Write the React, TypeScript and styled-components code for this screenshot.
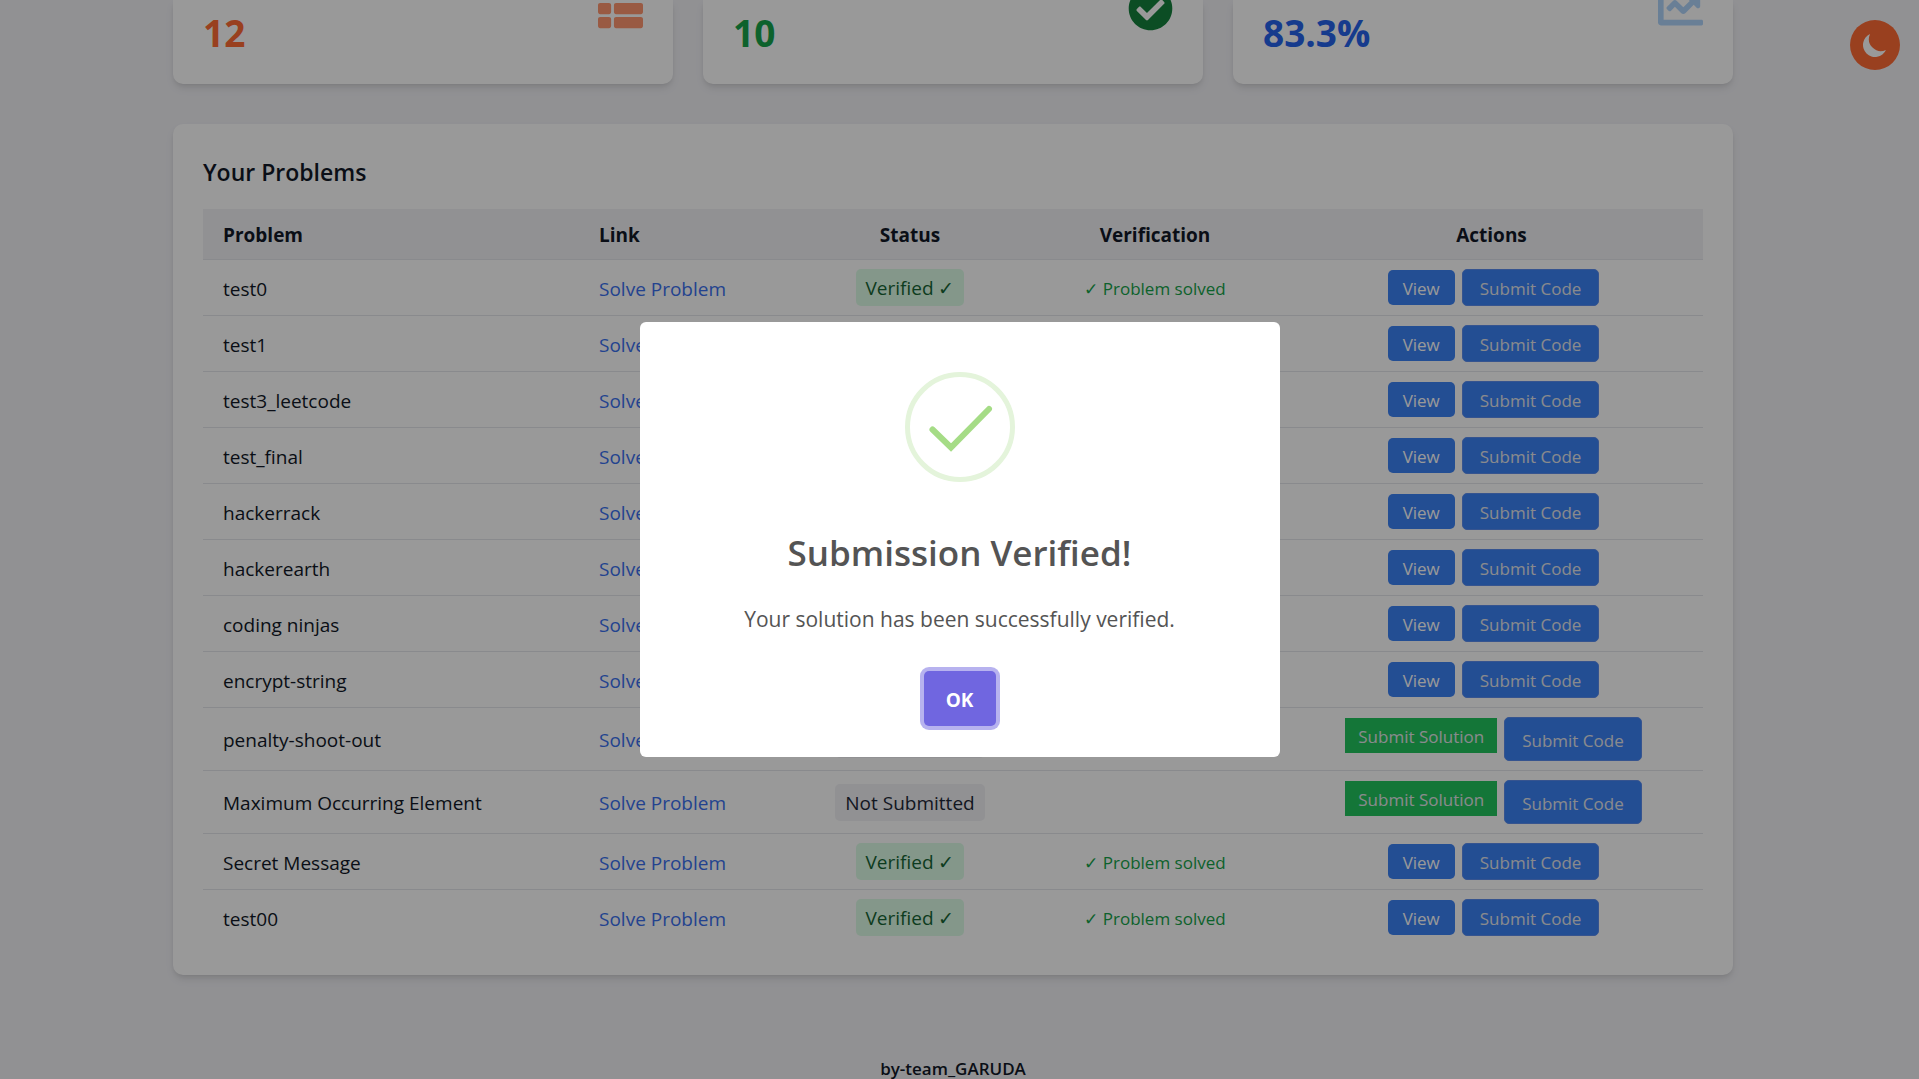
import React from 'react';
import styled, { createGlobalStyle, css } from 'styled-components';
import { FaThList, FaCheckCircle, FaChartLine } from 'react-icons/fa';

const GlobalStyle = createGlobalStyle`
  *, *::before, *::after { box-sizing: border-box; }
  body {
    margin: 0;
    overflow: hidden;
    background: #f2f2f6;
    color: #111827;
    font-family: 'Segoe UI', 'Open Sans', 'Noto Sans', sans-serif;
    font-size: 19px;
    line-height: 30px;
  }
  button { font-family: inherit; cursor: pointer; }
`;

const Page = styled.div`
  height: 100vh;
  overflow: hidden;
  padding-right: 13px;
  display: flex;
  flex-direction: column;
`;

const Container = styled.main`
  width: 100%;
  max-width: 1600px;
  margin: 0 auto;
  padding: 0 20px;
  display: flex;
  flex-direction: column;
  gap: 40px;
`;

const Stats = styled.section`
  display: grid;
  grid-template-columns: repeat(3, 1fr);
  gap: 30px;
`;

const cardLook = css`
  background: #fff;
  box-shadow: 0 5px 8px -1px rgba(0, 0, 0, 0.1), 0 2px 5px -2px rgba(0, 0, 0, 0.1);
`;

const StatCard = styled.article`
  ${cardLook}
  height: 84px;
  padding: 0 30px;
  border-radius: 0 0 10px 10px;
  display: flex;
  justify-content: space-between;
`;

const StatValue = styled.p<{ $color: string }>`
  margin: 0;
  padding-top: 8px;
  font-size: 37px;
  line-height: 50px;
  font-weight: 700;
  color: ${(p) => p.$color};
`;

const StatIcon = styled.span<{ $color: string }>`
  height: 31px;
  display: flex;
  align-items: flex-end;
  color: ${(p) => p.$color};
  svg { display: block; flex: none; }
`;

const Panel = styled.section`
  ${cardLook}
  padding: 30px;
  border-radius: 10px;
`;

const PanelTitle = styled.h2`
  margin: 0;
  padding: 1px 0 19px;
  font-size: 23px;
  line-height: 35px;
  font-weight: 600;
`;

const Table = styled.table`
  width: 100%;
  table-layout: fixed;
  border-collapse: separate;
  border-spacing: 0;
`;

const Col = styled.col<{ $w?: number }>`
  width: ${(p) => (p.$w ? `${p.$w}px` : 'auto')};
`;

const Th = styled.th<{ $center?: boolean }>`
  height: 51px;
  padding: 2px 20px 0;
  background: #f2f2f6;
  border-bottom: 1px solid #e5e7eb;
  font-weight: 700;
  text-align: ${(p) => (p.$center ? 'center' : 'left')};
`;

const Td = styled.td<{ $center?: boolean }>`
  padding: 9px 20px;
  border-bottom: 1px solid #e5e7eb;
  text-align: ${(p) => (p.$center ? 'center' : 'left')};
  white-space: nowrap;
  tr:last-child > & { border-bottom: 0; }
`;

const TextLine = styled.span`
  display: block;
  padding-top: 2px;
`;

const SolveLink = styled.a`
  color: #3b70ee;
  text-decoration: none;
`;

const Badge = styled.span<{ $ok?: boolean }>`
  display: inline-block;
  vertical-align: middle;
  height: 37px;
  padding: 1px 10px 0;
  border-radius: 5px;
  line-height: 37px;
  background: ${(p) => (p.$ok ? '#dcfce7' : '#f2f2f6')};
  color: ${(p) => (p.$ok ? '#166534' : '#1f2937')};
`;

const Solved = styled.span`
  font-size: 17px;
  color: #16a34a;
`;

const Actions = styled.div`
  display: flex;
  justify-content: center;
  align-items: center;
  gap: 7px;
  padding-left: 4px;
`;

const Action = styled.button<{ $kind: 'view' | 'solution' | 'code'; $tall?: boolean }>`
  height: 35px;
  padding: 2px 15px 0;
  border: 0;
  border-radius: 5px;
  background: #3b82f6;
  color: #fff;
  font-size: 17px;
  line-height: 25px;
  ${(p) => p.$kind === 'solution' && css`
    align-self: flex-start;
    margin-top: 1px;
    padding: 2px 13px 0;
    border-radius: 0;
    background: #22c55e;
    color: #e5e7eb;
  `}
  ${(p) => p.$kind === 'code' && css`
    height: ${p.$tall ? 44 : 37}px;
    padding: 2px 17px 0;
    border: 1px solid #5b8def;
    color: #e5e7eb;
  `}
`;

const Footer = styled.footer`
  margin-top: 79px;
  text-align: center;
  font-size: 17px;
  font-weight: 600;
`;

const ThemeToggle = styled.button`
  position: fixed;
  top: 20px;
  right: 19px;
  width: 50px;
  height: 50px;
  padding: 0;
  border: 0;
  border-radius: 50%;
  display: grid;
  place-items: center;
  background: #ff6b35;
  color: #fff;
`;

const Overlay = styled.div`
  position: fixed;
  inset: 0;
  display: grid;
  place-items: center;
  background: rgba(0, 0, 0, 0.4);
`;

const Dialog = styled.div`
  width: 640px;
  padding: 50px 0 31px;
  border-radius: 6px;
  background: #fff;
  color: #545454;
  display: flex;
  flex-direction: column;
  align-items: center;
`;

const DialogTitle = styled.h2`
  margin: 43px 0 0;
  font-size: 35px;
  line-height: 56px;
  font-weight: 600;
`;

const DialogText = styled.p`
  margin: 21px 0 0;
  font-size: 21px;
  line-height: 34px;
`;

const OkButton = styled.button`
  margin-top: 35px;
  width: 72px;
  height: 55px;
  padding: 2px 0 0;
  border: 0;
  border-radius: 5px;
  background: #7066e0;
  box-shadow: 0 0 0 4px rgba(112, 102, 224, 0.5);
  color: #fff;
  font-size: 19px;
  font-weight: 700;
`;

type Problem = { name: string; verified: boolean };

const problems: Problem[] = [
  { name: 'test0', verified: true },
  { name: 'test1', verified: true },
  { name: 'test3_leetcode', verified: true },
  { name: 'test_final', verified: true },
  { name: 'hackerrack', verified: true },
  { name: 'hackerearth', verified: true },
  { name: 'coding ninjas', verified: true },
  { name: 'encrypt-string', verified: true },
  { name: 'penalty-shoot-out', verified: false },
  { name: 'Maximum Occurring Element', verified: false },
  { name: 'Secret Message', verified: true },
  { name: 'test00', verified: true },
];

function ProblemRow({ name, verified }: Problem) {
  return (
    <tr>
      <Td><TextLine>{name}</TextLine></Td>
      <Td><TextLine><SolveLink href="#">Solve Problem</SolveLink></TextLine></Td>
      <Td $center><Badge $ok={verified}>{verified ? 'Verified ✓' : 'Not Submitted'}</Badge></Td>
      <Td $center>{verified && <TextLine><Solved>✓ Problem solved</Solved></TextLine>}</Td>
      <Td $center>
        <Actions>
          {verified
            ? <Action type="button" $kind="view">View</Action>
            : <Action type="button" $kind="solution">Submit Solution</Action>}
          <Action type="button" $kind="code" $tall={!verified}>Submit Code</Action>
        </Actions>
      </Td>
    </tr>
  );
}

function MoonIcon() {
  return (
    <svg width="30" height="30" viewBox="0 0 20 20" fill="currentColor" aria-hidden="true">
      <path d="M17.293 13.293A8 8 0 016.707 2.707a8.001 8.001 0 1010.586 10.586z" />
    </svg>
  );
}

export default function App() {
  return (
    <>
      <GlobalStyle />
      <Page>
        <Container>
          <Stats>
            <StatCard>
              <StatValue $color="#ff6b35">12</StatValue>
              <StatIcon $color="#ff9770"><FaThList size={45} /></StatIcon>
            </StatCard>
            <StatCard>
              <StatValue $color="#16a34a">10</StatValue>
              <StatIcon $color="#15803d"><FaCheckCircle size={45} /></StatIcon>
            </StatCard>
            <StatCard>
              <StatValue $color="#2563eb">83.3%</StatValue>
              <StatIcon $color="#b0d4fb"><FaChartLine size={45} /></StatIcon>
            </StatCard>
          </Stats>
          <Panel>
            <PanelTitle>Your Problems</PanelTitle>
            <Table>
              <colgroup>
                <Col $w={376} /><Col $w={211} /><Col $w={240} /><Col $w={250} /><Col />
              </colgroup>
              <thead>
                <tr>
                  <Th>Problem</Th>
                  <Th>Link</Th>
                  <Th $center>Status</Th>
                  <Th $center>Verification</Th>
                  <Th $center>Actions</Th>
                </tr>
              </thead>
              <tbody>
                {problems.map((p) => <ProblemRow key={p.name} {...p} />)}
              </tbody>
            </Table>
          </Panel>
        </Container>
        <Footer>by-team_GARUDA</Footer>
      </Page>
      <ThemeToggle type="button" aria-label="Toggle dark mode"><MoonIcon /></ThemeToggle>
      <Overlay>
        <Dialog role="dialog" aria-modal="true" aria-labelledby="dialog-title">
          <svg width="110" height="110" viewBox="0 0 110 110" fill="none" aria-hidden="true">
            <circle cx="55" cy="55" r="52.5" stroke="#e4f4db" strokeWidth="5" />
            <path d="M27.5 57.5L46 75.5L84 37" stroke="#a5dc86" strokeWidth="6" strokeLinecap="round" />
          </svg>
          <DialogTitle id="dialog-title">Submission Verified!</DialogTitle>
          <DialogText>Your solution has been successfully verified.</DialogText>
          <OkButton type="button">OK</OkButton>
        </Dialog>
      </Overlay>
    </>
  );
}
